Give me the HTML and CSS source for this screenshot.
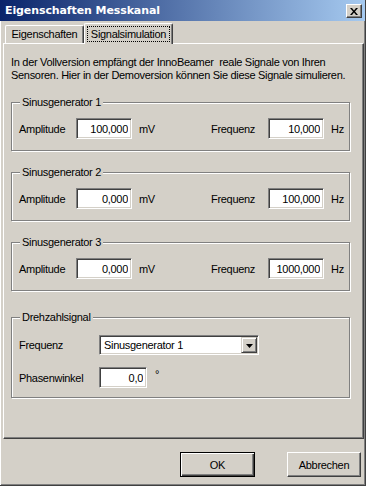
FILE: index.html
```html
<!DOCTYPE html>
<html lang="de">
<head>
  <meta charset="UTF-8">
  <title>Eigenschaften Messkanal</title>
  <link rel="stylesheet" href="styles.css">
</head>
<body>
  <div class="window">
    <div class="titlebar">
      <span class="title">Eigenschaften Messkanal</span>
      <div class="close-btn">
        <svg width="8" height="7" viewBox="0 0 8 7"><path d="M0 0h2l2 2.4 2-2.4h2L5 3.5 8 7H6L4 4.6 2 7H0l3-3.5z" fill="#000"/></svg>
      </div>
    </div>

    <div class="main">
      <div class="tabs">
        <div class="tab">Eigenschaften</div>
        <div class="tab active"><span class="focus">Signalsimulation</span></div>
      </div>

      <div class="panel">
        <p class="intro">In der Vollversion empfängt der InnoBeamer&nbsp; reale Signale von Ihren<br>Sensoren. Hier in der Demoversion können Sie diese Signale simulieren.</p>

        <fieldset class="group">
          <legend>Sinusgenerator 1</legend>
          <div class="gen-row">
            <span>Amplitude</span>
            <input class="edit" type="text" value="100,000">
            <span class="unit">mV</span>
            <span>Frequenz</span>
            <input class="edit" type="text" value="10,000">
            <span class="unit">Hz</span>
          </div>
        </fieldset>

        <fieldset class="group">
          <legend>Sinusgenerator 2</legend>
          <div class="gen-row">
            <span>Amplitude</span>
            <input class="edit" type="text" value="0,000">
            <span class="unit">mV</span>
            <span>Frequenz</span>
            <input class="edit" type="text" value="100,000">
            <span class="unit">Hz</span>
          </div>
        </fieldset>

        <fieldset class="group">
          <legend>Sinusgenerator 3</legend>
          <div class="gen-row">
            <span>Amplitude</span>
            <input class="edit" type="text" value="0,000">
            <span class="unit">mV</span>
            <span>Frequenz</span>
            <input class="edit" type="text" value="1000,000">
            <span class="unit">Hz</span>
          </div>
        </fieldset>

        <fieldset class="group group-rpm">
          <legend>Drehzahlsignal</legend>
          <div class="rpm-rows">
            <span>Frequenz</span>
            <div class="combo">
              <span class="combo-text">Sinusgenerator 1</span>
              <span class="combo-btn">
                <svg width="7" height="4" viewBox="0 0 7 4"><polygon points="0,0 7,0 3.5,4" fill="#000"/></svg>
              </span>
            </div>
            <span>Phasenwinkel</span>
            <div class="phase">
              <input class="edit edit-small" type="text" value="0,0">
              <span class="deg">°</span>
            </div>
          </div>
        </fieldset>
      </div>

      <div class="buttons">
        <button class="btn btn-default">OK</button>
        <button class="btn">Abbrechen</button>
      </div>
    </div>
  </div>
</body>
</html>
```

FILE: styles.css
```css
* {
  box-sizing: border-box;
}

body {
  margin: 0;
  font-family: 'Liberation Sans', Arial, sans-serif;
  font-size: 11px;
  letter-spacing: -0.3px;
  color: #000;
  background: #d4d0c8;
}

.window {
  width: 366px;
  height: 486px;
  background: #d4d0c8;
  border-right: 1px solid #404040;
  border-bottom: 1px solid #404040;
  box-shadow: inset -1px -1px 0 #808080;
  display: flex;
  flex-direction: column;
}

.titlebar {
  height: 21px;
  flex-shrink: 0;
  display: flex;
  justify-content: space-between;
  padding: 0 3px 0 5px;
  background: linear-gradient(to right, #0a246a, #a6caf0);
}

.title {
  color: #fff;
  font-weight: bold;
  line-height: 21px;
  font-family: 'DejaVu Sans', 'Liberation Sans', sans-serif;
  font-size: 11px;
  letter-spacing: -0.1px;
}

.close-btn {
  width: 16px;
  height: 14px;
  margin-top: 4px;
  background: #d4d0c8;
  border: 1px solid;
  border-color: #fff #404040 #404040 #fff;
  box-shadow: inset -1px -1px 0 #808080;
  display: flex;
  align-items: center;
  justify-content: center;
}

.main {
  flex: 1;
  display: flex;
  flex-direction: column;
  border-left: 1px solid #fff;
}

.tabs {
  display: flex;
  align-items: flex-end;
  margin-top: 1px;
  padding-left: 4px;
  height: 21px;
}

.tab {
  width: 79px;
  height: 18px;
  border: 1px solid #fff;
  border-right-color: #404040;
  border-bottom: none;
  border-radius: 2px 2px 0 0;
  box-shadow: inset -1px 0 0 #808080;
  text-align: center;
  line-height: 17px;
}

.tab.active {
  width: 89px;
  height: 21px;
  margin-bottom: -1px;
  position: relative;
  z-index: 1;
  background: #d4d0c8;
  padding: 2px 2px 0 2px;
}

.focus {
  display: block;
  height: 16px;
  line-height: 14px;
  border: 1px dotted #000;
}

.panel {
  height: 396px;
  margin: 0 1px 0 2px;
  padding: 0 0 0 7px;
  border: 1px solid #fff;
  border-right-color: #404040;
  border-bottom-color: #404040;
  box-shadow: inset -1px -1px 0 #808080;
}

.intro {
  margin: 12px 0 0 0;
  line-height: 13px;
  white-space: nowrap;
}

.group {
  width: 339px;
  margin: 14px 0 0 0;
  padding: 0;
  min-inline-size: 0;
  border: 1px solid #808080;
  box-shadow: 1px 1px 0 #fff, inset 1px 1px 0 #fff;
}

.group:first-of-type {
  margin-top: 13px;
}

.group legend {
  margin-left: 8px;
  padding: 0 2px;
  line-height: 14px;
  background: #d4d0c8;
}

.gen-row {
  display: grid;
  grid-template-columns: 57px 56px 79px 57px 56px auto;
  align-items: center;
  padding: 9px 0 11px 7px;
}

.unit {
  padding-left: 7px;
}

.edit {
  width: 56px;
  height: 21px;
  margin: 0;
  padding: 0 3px 0 2px;
  font: inherit;
  letter-spacing: inherit;
  color: #000;
  text-align: right;
  background: #fff;
  border: 1px solid;
  border-color: #808080 #fff #fff #808080;
  box-shadow: inset 1px 1px 0 #404040, inset -1px -1px 0 #d4d0c8;
  outline: none;
}

.group-rpm {
  margin-top: 19px;
}

.rpm-rows {
  display: grid;
  grid-template-columns: 80px auto;
  row-gap: 12px;
  align-items: center;
  justify-items: start;
  padding: 11px 0 9px 7px;
}

.combo {
  width: 160px;
  height: 20px;
  display: flex;
  align-items: center;
  background: #fff;
  border: 1px solid;
  border-color: #808080 #fff #fff #808080;
  box-shadow: inset 1px 1px 0 #404040, inset -1px -1px 0 #d4d0c8;
  padding: 1px;
}

.combo-text {
  flex: 1;
  padding-left: 3px;
}

.combo-btn {
  width: 16px;
  height: 16px;
  background: #d4d0c8;
  border: 1px solid;
  border-color: #d4d0c8 #404040 #404040 #d4d0c8;
  box-shadow: inset 1px 1px 0 #fff, inset -1px -1px 0 #808080;
  display: flex;
  align-items: center;
  justify-content: center;
  padding-top: 1px;
}

.phase {
  display: flex;
  align-items: flex-start;
}

.edit-small {
  width: 48px;
}

.deg {
  padding-left: 8px;
  line-height: 14px;
}

.buttons {
  display: flex;
  justify-content: flex-end;
  gap: 32px;
  padding: 13px 4px 0 0;
}

.btn {
  width: 74px;
  height: 25px;
  margin: 0;
  padding: 0;
  font: inherit;
  letter-spacing: inherit;
  color: #000;
  background: #d4d0c8;
  border: 1px solid;
  border-color: #fff #404040 #404040 #fff;
  box-shadow: inset -1px -1px 0 #808080;
}

.btn-default {
  width: 75px;
  border: 1px solid #000;
  box-shadow: inset 1px 1px 0 #fff, inset -1px -1px 0 #404040, inset -2px -2px 0 #808080;
}
```
